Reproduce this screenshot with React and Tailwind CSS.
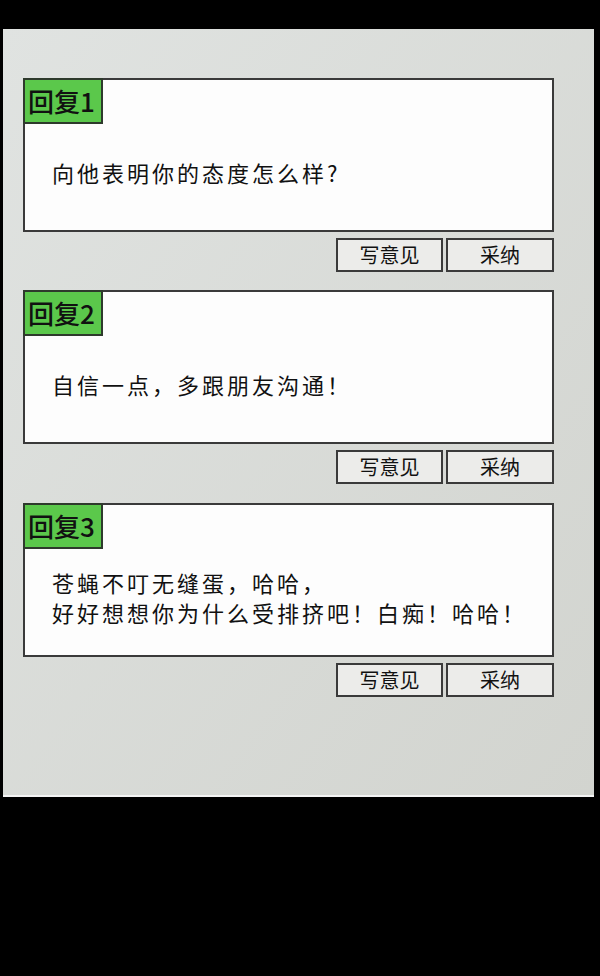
const replies = [
  { id: 1, gap: "mt-0", lines: ["向他表明你的态度怎么样?"] },
  { id: 2, gap: "mt-[18px]", lines: ["自信一点，多跟朋友沟通！"] },
  { id: 3, gap: "mt-[19px]", lines: ["苍蝇不叮无缝蛋，哈哈，", "好好想想你为什么受排挤吧！白痴！哈哈！"] },
];

function ReplyCard({ reply }) {
  return (
    <div className={reply.gap}>
      <div className="h-[154px] border-2 border-[#3a3a3a] bg-[#fdfdfd] flex flex-col">
        <div className="w-[80px] h-[46px] -ml-[2px] -mt-[2px] border-2 border-[#2e3a2c] bg-[#5bc84b] flex items-center pl-[3px] text-[26px] font-medium leading-none text-[#111]">
          回复{reply.id}
        </div>
        <div className="flex-1 flex flex-col justify-center pl-[27px] pb-[10px] text-[22px] leading-[30px] tracking-[3px] text-[#111]">
          {reply.lines.map((line) => (
            <div key={line}>{line}</div>
          ))}
        </div>
      </div>
      <div className="flex justify-end gap-[3px] mt-[6px]">
        <button className="w-[107px] h-[34px] border-2 border-[#3a3a3a] bg-[#ececea] text-[20px] leading-none text-[#111]">
          写意见
        </button>
        <button className="w-[108px] h-[34px] border-2 border-[#3a3a3a] bg-[#ececea] text-[20px] leading-none text-[#111]">
          采纳
        </button>
      </div>
    </div>
  );
}

export default function App() {
  return (
    <div
      className="w-[600px] h-[976px] bg-black pt-[29px] px-[3px]"
      style={{ fontFamily: '"Noto Sans CJK SC", "Noto Sans", sans-serif' }}
    >
      <div className="w-[591px] h-[768px] bg-linear-to-br from-[#e0e3e1] to-[#d2d4cf] border-b-2 border-[#f4f4f4] pt-[49px] pl-[20px] pr-[40px] flex flex-col">
        {replies.map((reply) => (
          <ReplyCard key={reply.id} reply={reply} />
        ))}
      </div>
    </div>
  );
}
